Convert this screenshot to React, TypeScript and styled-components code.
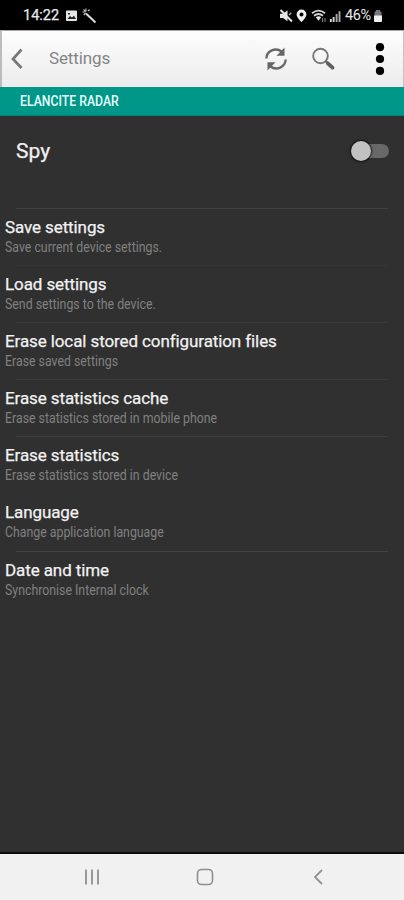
import React from "react";
import styled, { createGlobalStyle } from "styled-components";

const GlobalStyle = createGlobalStyle`
  * { box-sizing: border-box; }
  html, body { margin: 0; padding: 0; background: #303030; }
  body { font-family: Roboto, "Liberation Sans", sans-serif; }
`;

const Screen = styled.div`
  width: 404px;
  height: 900px;
  display: flex;
  flex-direction: column;
  overflow: hidden;
  background: #303030;
`;

const StatusBar = styled.header`
  height: 30px;
  flex: none;
  display: flex;
  align-items: center;
  padding: 1px 21px 0 23px;
  background: #000;
  color: #e8e8e8;
`;

const Clock = styled.span`
  width: 41px;
  font-size: 14.5px;
  line-height: 18px;
  font-weight: 400;
  -webkit-text-stroke: 0.25px #e8e8e8;
  white-space: nowrap;
`;

const StatusIcons = styled.svg`
  display: block;
  flex: none;
`;

const StatusRight = styled.div`
  display: flex;
  align-items: center;
  margin-left: auto;
`;

const Percent = styled.span`
  width: 28px;
  margin-left: 2px;
  font-size: 14.5px;
  line-height: 18px;
  letter-spacing: -0.4px;
  white-space: nowrap;
`;

const Toolbar = styled.nav`
  height: 57px;
  flex: none;
  display: flex;
  align-items: center;
  border-top: 1px solid #a8a8a8;
  border-left: 2px solid #bcbcbc;
  border-right: 1px solid #c4c4c4;
  background: linear-gradient(#fdfdfd, #ececec);
`;

const IconButton = styled.button<{ $width: number; $gap?: number }>`
  width: ${(p) => p.$width}px;
  height: 40px;
  margin: 0 0 0 ${(p) => p.$gap ?? 0}px;
  padding: 0 0 1px;
  border: 0;
  background: none;
  display: flex;
  align-items: center;
  justify-content: center;
  flex: none;
`;

const Title = styled.h1`
  margin: 0 auto 2px 17px;
  font-size: 17px;
  line-height: 22px;
  font-weight: 400;
  letter-spacing: -0.12px;
  color: #858585;
`;

const SectionHeader = styled.div`
  height: 29px;
  flex: none;
  padding-left: 20px;
  background: #009788;
  border-bottom: 1px solid #087f75;
  color: #e9fffb;
`;

const Condensed = styled.span<{ $size: number; $scale: number }>`
  display: inline-block;
  font-size: ${(p) => p.$size}px;
  transform: scaleX(${(p) => p.$scale});
  transform-origin: 0 50%;
  white-space: nowrap;
`;

const SectionLabel = styled(Condensed)`
  line-height: 29px;
  font-weight: 500;
`;

const SpyRow = styled.div`
  height: 92px;
  flex: none;
  display: flex;
  align-items: flex-start;
  justify-content: space-between;
  padding: 22px 15px 0 16px;
`;

const SpyLabel = styled.span`
  font-size: 21px;
  line-height: 26px;
  color: #f0f0f0;
  -webkit-text-stroke: 0.25px #f0f0f0;
`;

const SwitchTrack = styled.span`
  width: 38px;
  height: 14px;
  margin-top: 6px;
  display: flex;
  align-items: center;
  border-radius: 7px;
  background: linear-gradient(90deg, transparent 10px, #686868 10px);
`;

const SwitchThumb = styled.span`
  width: 20px;
  height: 20px;
  flex: none;
  border-radius: 50%;
  background: #c2c2c2;
  box-shadow: 0 0 2px 1px rgba(0, 0, 0, 0.65);
`;

const List = styled.ul`
  margin: 0;
  padding: 0;
  flex: 1;
  list-style: none;
`;

const Item = styled.li<{ $line: string }>`
  height: 57.1px;
  padding: 8px 5px 0;
  background: linear-gradient(${(p) => p.$line}, ${(p) => p.$line}) 16px 0 / 372px 1px no-repeat;
`;

const ItemTitle = styled.div`
  font-size: 17px;
  line-height: 22px;
  letter-spacing: -0.1px;
  color: #f2f2f2;
  -webkit-text-stroke: 0.25px #f2f2f2;
  white-space: nowrap;
`;

const ItemText = styled(Condensed)`
  display: block;
  line-height: 18px;
  color: #808080;
`;

const NavBar = styled.footer`
  height: 48px;
  flex: none;
  display: flex;
  align-items: center;
  justify-content: center;
  gap: 73px;
  padding: 0 0 1px 5px;
  border-top: 2px solid #0c0c0c;
  background: #f1f1f1;
`;

const items = [
  { title: "Save settings", text: "Save current device settings.", line: "#424242" },
  { title: "Load settings", text: "Send settings to the device.", line: "#353535" },
  { title: "Erase local stored configuration files", text: "Erase saved settings", line: "#393939" },
  { title: "Erase statistics cache", text: "Erase statistics stored in mobile phone", line: "#3a3a3a" },
  { title: "Erase statistics", text: "Erase statistics stored in device", line: "#3e3e3e" },
  { title: "Language", text: "Change application language", line: "#323232" },
  { title: "Date and time", text: "Synchronise Internal clock", line: "#444444" },
];

export default function App() {
  return (
    <>
      <GlobalStyle />
      <Screen>
        <StatusBar>
          <Clock>14:22</Clock>
          <StatusIcons width="34" height="18" viewBox="0 0 34 18">
            <path d="M3 3.500h9q1 0 1 1v8.500q0 1-1 1H3q-1 0-1-1V4.500q0-1 1-1z" fill="#e6e6e6" />
            <path d="M3.500 12l2.500-3 2 1.600 2-1.800 2 3.200z" fill="#222" />
            <path d="M4 6h2v1.500H4z" fill="#333" />
            <path d="M22 6.500l9.500 9" stroke="#dcdcdc" strokeWidth="2" />
            <path d="M22 1.500v3M18.500 5h3M19.500 2.500l2 2M19.800 8l1.700-2M24 4l1.500-1.500" stroke="#b8b8b8" strokeWidth="1.200" />
          </StatusIcons>
          <StatusRight>
            <StatusIcons width="64" height="18" viewBox="0 0 64 18">
              <path d="M1 6.800h3l4.500-3.500v11L4 11H1z" fill="#e5e5e5" />
              <path d="M1.500 3l11.500 11.500" stroke="#e5e5e5" strokeWidth="1.900" />
              <path d="M10 8l2.300-2.300" stroke="#aaa" strokeWidth="1.400" />
              <path fillRule="evenodd" d="M22.500 2.500a4.900 4.900 0 0 0-4.900 4.900c0 3 4.900 7.600 4.900 7.600s4.900-4.600 4.900-7.600A4.900 4.900 0 0 0 22.500 2.500zm0 3a2 2 0 1 1 0 4 2 2 0 0 1 0-4z" fill="#f0f0f0" />
              <path d="M33 6.200q6.500-5 13 0M35 8.700q4.500-3.500 9 0" fill="none" stroke="#d5d5d5" strokeWidth="1.800" />
              <path d="M36.800 10.200q2.700-2 5.400 0l-2.700 3.500z" fill="#e5e5e5" />
              <path d="M43.500 11v4M46 11v4" stroke="#777" strokeWidth="1.200" />
              <path d="M51.800 12v3M54.600 10v5" stroke="#d5d5d5" strokeWidth="1.900" />
              <path d="M57.600 7v8M60.500 4.200V15" stroke="#aaa" strokeWidth="1.900" />
            </StatusIcons>
            <Percent>46%</Percent>
            <StatusIcons width="10" height="18" viewBox="0 0 10 18">
              <path d="M3 3h4v1.500h1.500V9h-7V4.500H3z" fill="#777" />
              <path d="M1 8.500h8V14q0 1-1 1H2q-1 0-1-1z" fill="#f0f0f0" />
            </StatusIcons>
          </StatusRight>
        </StatusBar>

        <Toolbar>
          <IconButton $width={30} aria-label="Back">
            <svg width="14" height="22" viewBox="0 0 14 22">
              <path d="M11.500 1.500L3 11l8.500 9" fill="none" stroke="#777" strokeWidth="2.700" />
            </svg>
          </IconButton>
          <Title>Settings</Title>
          <IconButton $width={28} aria-label="Refresh">
            <svg width="26" height="26" viewBox="0 0 26 26">
              <path d="M3.300 12.500A9.500 9.500 0 0 1 18.500 5.500M22.700 13.500A9.500 9.500 0 0 1 7.500 20.500" fill="none" stroke="#666" strokeWidth="2.400" />
              <path d="M21.500 1.500v8.300h-8zM4.500 24.500v-8.300h8z" fill="#666" />
            </svg>
          </IconButton>
          <IconButton $width={28} $gap={19} aria-label="Search">
            <svg width="26" height="26" viewBox="0 0 26 26">
              <circle cx="10.500" cy="10" r="7.300" fill="none" stroke="#777" strokeWidth="1.900" />
              <path d="M15.500 15l2.500 2.500" stroke="#666" strokeWidth="2" />
              <path d="M17.800 17.300l4.700 4.300" stroke="#606060" strokeWidth="3.800" strokeLinecap="round" />
            </svg>
          </IconButton>
          <IconButton $width={28} $gap={29} aria-label="More options">
            <svg width="10" height="34" viewBox="0 0 10 34">
              <circle cx="5" cy="5.200" r="4.100" fill="#000" />
              <circle cx="5" cy="17" r="4.100" fill="#000" />
              <circle cx="5" cy="28.900" r="4.100" fill="#000" />
            </svg>
          </IconButton>
          <IconButton as="span" $width={9} />
        </Toolbar>

        <SectionHeader>
          <SectionLabel $size={14} $scale={0.875}>ELANCITE RADAR</SectionLabel>
        </SectionHeader>

        <SpyRow>
          <SpyLabel>Spy</SpyLabel>
          <SwitchTrack role="switch" aria-checked="false">
            <SwitchThumb />
          </SwitchTrack>
        </SpyRow>

        <List>
          {items.map((item) => (
            <Item key={item.title} $line={item.line}>
              <ItemTitle>{item.title}</ItemTitle>
              <ItemText $size={14} $scale={0.88}>{item.text}</ItemText>
            </Item>
          ))}
        </List>

        <NavBar>
          <svg width="40" height="20" viewBox="0 0 40 20">
            <path d="M14 2.500v15M20 2.500v15M26 2.500v15" stroke="#999" strokeWidth="2" />
          </svg>
          <svg width="40" height="20" viewBox="0 0 40 20">
            <rect x="12.500" y="2.500" width="15" height="15" rx="4" fill="none" stroke="#8f8f8f" strokeWidth="1.600" />
          </svg>
          <svg width="40" height="20" viewBox="0 0 40 20">
            <path d="M24 3l-7 7 7 7" fill="none" stroke="#929292" strokeWidth="1.800" />
          </svg>
        </NavBar>
      </Screen>
    </>
  );
}
